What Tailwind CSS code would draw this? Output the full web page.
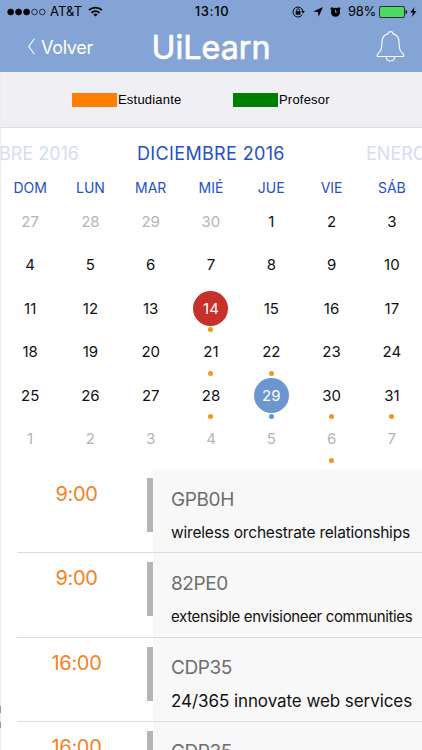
<!DOCTYPE html>
<html lang="es">

<head>
  <meta charset="UTF-8" />
  <title>UiLearn</title>
  <meta name="viewport" content="width=device-width, initial-scale=1" />
  <script src="https://cdn.jsdelivr.net/npm/@tailwindcss/browser@4"></script>
</head>

<body class="bg-white">
  <div class="relative w-[422px] h-[750px] overflow-hidden flex flex-col bg-white font-['Inter',sans-serif] text-black">

    <!-- Status bar + navigation -->
    <header class="h-[72px] shrink-0 bg-[#84a4d5]">
      <div class="h-[23px] grid grid-cols-3 items-center text-[13px] leading-none">
        <div class="flex items-center pl-[7px]">
          <svg width="40" height="8" viewBox="0 0 40 8" fill="none" stroke="#111" stroke-width=".8">
            <circle cx="3.7" cy="4" r="3" fill="#000" />
            <circle cx="11.6" cy="4" r="3" fill="#000" />
            <circle cx="19.6" cy="4" r="3" fill="#000" />
            <circle cx="27.5" cy="4" r="2.8" />
            <circle cx="35.3" cy="4" r="2.8" />
          </svg>
          <span class="ml-[3px] tracking-[0.1px]">AT&amp;T</span>
          <svg class="ml-[6px]" width="15" height="11" viewBox="0 0 15 11" fill="none" stroke="#000" stroke-width="1.8">
            <path d="M1 4.2a9.3 9.3 0 0 1 13 0" />
            <path d="M3.5 6.8a5.8 5.8 0 0 1 8 0" />
            <path d="M7.5 10.6 5.3 8.5a3.2 3.2 0 0 1 4.4 0z" fill="#000" stroke="none" />
          </svg>
        </div>
        <div class="pl-[2px] text-center font-medium tracking-[0.6px]">13:10</div>
        <div class="flex items-center justify-end pr-[5px]">
          <svg width="13" height="12" viewBox="0 0 13 12" fill="none" stroke="#000">
            <path d="M10.3 8.6A5 5 0 1 1 10.9 5" stroke-width="1" />
            <path d="M9 5h4l-2 2.6z" fill="#000" stroke="none" />
            <rect x="3.7" y="5.2" width="4.8" height="3.5" fill="#000" stroke="none" />
            <path d="M4.7 5.4V4.2a1.4 1.4 0 0 1 2.8 0v1.2" stroke-width=".9" />
          </svg>
          <svg class="ml-[8px]" width="10" height="10" viewBox="0 0 10 10">
            <path d="M10 0 5.6 9.8 5 5 .2 4.6z" />
          </svg>
          <svg class="ml-[7px]" width="11" height="12" viewBox="0 0 12 12">
            <circle cx="6" cy="6.3" r="4.9" />
            <circle cx="2.3" cy="2.5" r="1.7" />
            <circle cx="9.7" cy="2.5" r="1.7" />
            <path d="M6 3.3v3.2l2.2-.8" fill="none" stroke="#84a4d5" stroke-width=".9" />
          </svg>
          <span class="ml-[7px] tracking-[-0.3px]">98%</span>
          <svg class="ml-[3px]" width="29" height="12" viewBox="0 0 29 12">
            <rect x=".5" y=".5" width="25" height="11" rx="1.5" fill="#4cd964" stroke="#222" stroke-width=".9" />
            <path d="M26.7 4c1.8.3 1.8 3.7 0 4z" />
          </svg>
          <svg class="ml-[2px]" width="7" height="10" viewBox="0 0 7 10">
            <path d="M4.5 0 .3 5.6h2.6L2 10l4.5-6H3.9z" />
          </svg>
        </div>
      </div>

      <div class="h-[49px] flex items-center text-white">
        <div class="w-[150px] flex items-center pl-[27px] pb-[2px]">
          <svg width="9" height="17" viewBox="0 0 9 17" fill="none" stroke="#fff" stroke-width="1.1">
            <path d="M7.4.8 1.8 8.5l5.6 7.7" />
          </svg>
          <span class="ml-[5px] pt-[2px] text-[18px] leading-none tracking-[-0.3px]">Volver</span>
        </div>
        <svg width="124" height="49" viewBox="0 0 124 49" role="img">
          <text x="1.5" y="36" textLength="119" lengthAdjust="spacingAndGlyphs" fill="#fff" stroke="#fff"
            stroke-width=".7" stroke-linejoin="round" font-family="Inter, sans-serif" font-size="33">UiLearn</text>
        </svg>
        <svg class="ml-[102px] mb-[2px]" width="29" height="32" viewBox="0 0 29 32" fill="none" stroke="#fff"
          stroke-opacity=".9" stroke-width="1.2" stroke-linejoin="round">
          <path
            d="M12 2.8C12 0 17 0 17 2.8c4.3 1 6 4.2 6 8.300 0 6.500.8 9 4.600 12.100v2.300H1.400v-2.300C5.200 20.100 6 17.600 6 11.100c0-4.100 1.700-7.300 6-8.300z" />
          <path d="M10.200 25.500c.2 6 8.400 6 8.600 0" />
        </svg>
      </div>
    </header>

    <!-- Legend -->
    <div class="h-[56px] shrink-0 flex items-center bg-[#efeff4] border-b border-[#dcdce2] pl-[72px] font-['Liberation_Sans',sans-serif] text-[13px] leading-none tracking-[0.2px]">
      <span class="w-[45px] h-[14px] bg-[#ff8000]"></span>
      <span class="w-[116px] pl-px">Estudiante</span>
      <span class="w-[45px] h-[14px] bg-[#008000]"></span>
      <span class="pl-px">Profesor</span>
    </div>

    <!-- Month carousel -->
    <div class="h-[50px] shrink-0 grid grid-cols-[79px_1fr_56px] items-center pt-[2px] whitespace-nowrap text-[18px] leading-none text-[#d5dcf6]">
      <div class="flex justify-end">NOVIEMBRE 2016</div>
      <div class="pl-[58px] tracking-[0.35px] text-[#2450c8]">DICIEMBRE 2016</div>
      <div>ENERO 2017</div>
    </div>

    <!-- Calendar -->
    <div class="w-[422px] h-[21px] shrink-0 grid grid-cols-7 items-center pb-[2px] text-center text-[14px] leading-none text-[#2450c8]">
      <span>DOM</span><span>LUN</span><span>MAR</span><span>MIÉ</span><span>JUE</span><span>VIE</span><span>SÁB</span>
    </div>
    <div id="days" class="w-[422px] h-[270px] shrink-0 grid grid-cols-7 auto-rows-[43.5px] text-[15px] leading-none"></div>

    <!-- Agenda -->
    <div id="agenda" class="shrink-0"></div>

    <!-- Edge of the side menu peeking out on the left -->
    <div class="absolute left-0 top-[72px] w-px h-[678px] bg-[#ececee]">
      <div class="h-[634px]"></div>
      <div class="h-[7px] bg-[#999]"></div>
      <div class="mt-[9px] h-[6px] bg-[#999]"></div>
    </div>
  </div>

  <script>
    const dots = { 17: 1, 24: 1, 25: 1, 31: 1, 32: 2, 33: 1, 34: 1, 40: 1 };
    const days = document.getElementById('days');

    for (let i = 0; i < 42; i++) {
      const day = i < 4 ? 27 + i : i < 35 ? i - 3 : i - 34;
      let style = i < 4 || i > 34 ? 'text-[#b4b4b4]' : 'text-[#111]';
      if (i === 17) style = 'bg-[#c7302b] text-white';
      if (i === 32) style = 'bg-[#6d95d0] text-white';
      const dot = dots[i] ? (dots[i] === 2 ? 'bg-[#5597e4]' : 'bg-[#f7921e]') : '';
      days.innerHTML += `
        <div class="flex flex-col items-center pt-[5px]">
          <span class="w-[35px] h-[35px] shrink-0 rounded-full flex items-center justify-center pb-px ${style}">${day}</span>
          <span class="mt-[1px] w-[5px] h-[5px] shrink-0 rounded-full ${dot}"></span>
        </div>`;
    }

    const events = [
      ['9:00', 'GPB0H', 'wireless orchestrate relationships', 'text-[15.5px] tracking-[-0.2px]'],
      ['9:00', '82PE0', 'extensible envisioneer communities', 'text-[15px] tracking-[-0.35px]'],
      ['16:00', 'CDP35', '24/365 innovate web services', 'text-[17px] tracking-[-0.07px]'],
      ['16:00', 'CDP35', '24/365 innovate web services', 'text-[17px] tracking-[-0.07px]'],
    ];

    document.getElementById('agenda').innerHTML = events.map(([time, code, title, size]) => `
      <div class="relative h-[84.3px] flex whitespace-nowrap">
        <div class="w-[153px] flex justify-between pt-[9px]">
          <span class="w-[147px] pl-[6px] pt-[5px] text-center text-[20px] leading-[22px] tracking-[-0.3px] text-[#f5821f]">${time}</span>
          <span class="w-[6px] h-[54px] bg-[#b5b5b5]"></span>
        </div>
        <div class="flex-1 bg-[#f8f8f8] pl-[18px] pt-[18.5px]">
          <div class="text-[19px] leading-[24px] tracking-[-0.4px] text-[#6e6e6e]">${code}</div>
          <div class="mt-[9px] leading-[24px] text-[#111] ${size}">${title}</div>
        </div>
        <div class="absolute left-[17px] right-0 bottom-0 h-px bg-[#dcdce0]"></div>
      </div>`).join('');
  </script>
</body>

</html>
